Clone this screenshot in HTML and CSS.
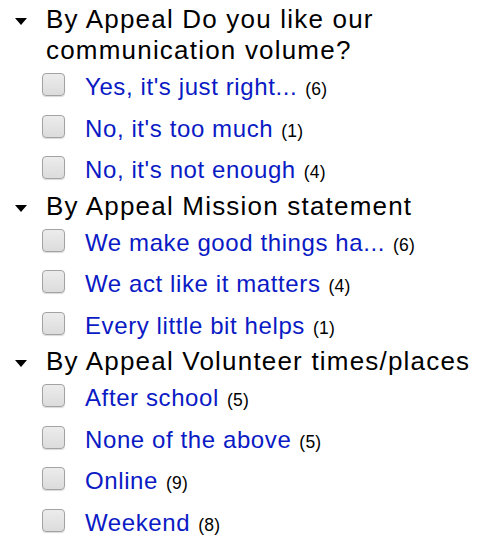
FILE: index.html
```html
<!DOCTYPE html>
<html>
<head>
<meta charset="utf-8">
<link rel="stylesheet" href="styles.css">
</head>
<body>
<div class="facets">
  <div class="group">
    <div class="group-title"><span class="caret"></span><span class="title-text">By Appeal Do you like our communication volume?</span></div>
    <ul class="items">
      <li class="item"><span class="box"></span><a class="label">Yes, it's just right...</a><span class="count">(6)</span></li>
      <li class="item"><span class="box"></span><a class="label">No, it's too much</a><span class="count">(1)</span></li>
      <li class="item"><span class="box"></span><a class="label">No, it's not enough</a><span class="count">(4)</span></li>
    </ul>
  </div>
  <div class="group">
    <div class="group-title"><span class="caret"></span><span class="title-text">By Appeal Mission statement</span></div>
    <ul class="items">
      <li class="item"><span class="box"></span><a class="label">We make good things ha...</a><span class="count">(6)</span></li>
      <li class="item"><span class="box"></span><a class="label">We act like it matters</a><span class="count">(4)</span></li>
      <li class="item"><span class="box"></span><a class="label">Every little bit helps</a><span class="count">(1)</span></li>
    </ul>
  </div>
  <div class="group">
    <div class="group-title"><span class="caret"></span><span class="title-text">By Appeal Volunteer times/places</span></div>
    <ul class="items">
      <li class="item"><span class="box"></span><a class="label">After school</a><span class="count">(5)</span></li>
      <li class="item"><span class="box"></span><a class="label">None of the above</a><span class="count">(5)</span></li>
      <li class="item"><span class="box"></span><a class="label">Online</a><span class="count">(9)</span></li>
      <li class="item"><span class="box"></span><a class="label">Weekend</a><span class="count">(8)</span></li>
    </ul>
  </div>
</div>
</body>
</html>
```
FILE: styles.css
```css
html, body {
  margin: 0;
  padding: 0;
  background: #fff;
}
body {
  font-family: "Liberation Sans", Arial, sans-serif;
  color: #000;
}
.facets {
  padding: 4px 0 0 15px;
}
.group-title {
  position: relative;
  font-size: 26px;
  line-height: 31px;
  letter-spacing: 1.2px;
  padding-left: 31px;
}
.caret {
  position: absolute;
  left: 0;
  top: 14px;
  width: 0;
  height: 0;
  border-left: 6.5px solid transparent;
  border-right: 6.5px solid transparent;
  border-top: 7px solid #000;
}
.items {
  list-style: none;
  margin: 0;
  padding: 0 0 0 27px;
}
.item {
  display: flex;
  align-items: baseline;
  height: 41.5px;
  line-height: 41.5px;
  font-size: 24px;
}
.box {
  align-self: flex-start;
  flex: none;
  width: 21px;
  height: 21px;
  margin-top: 7px;
  margin-right: 20px;
  border: 1px solid #a3a3a3;
  border-radius: 4px;
  background: linear-gradient(#ececec, #dcdcdc);
  box-shadow: 0 1px 1px rgba(0,0,0,0.15);
}
.label {
  color: #0a1ac4;
  text-decoration: none;
  letter-spacing: 0.6px;
}
.count {
  font-size: 17.5px;
  margin-left: 8px;
  letter-spacing: 0.2px;
}
```
